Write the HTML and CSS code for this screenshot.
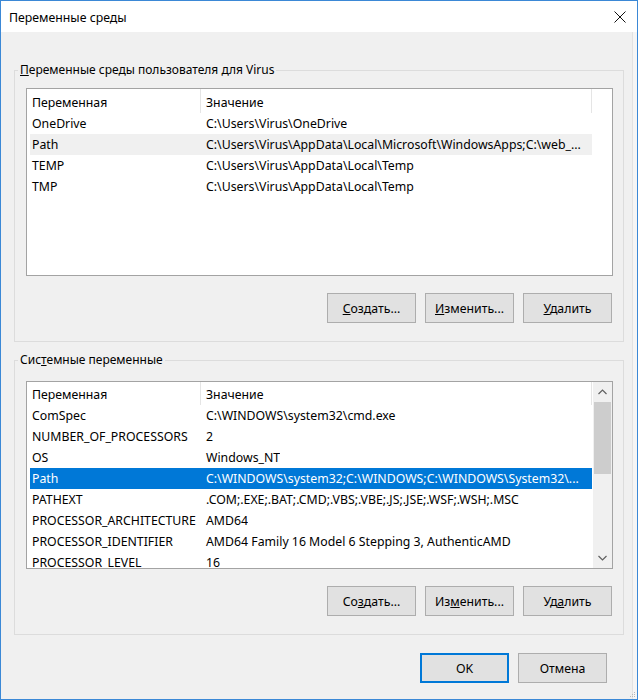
FILE: index.html
```html
<!DOCTYPE html>
<html lang="ru">
<head>
<meta charset="utf-8">
<title>Переменные среды</title>
<link rel="stylesheet" href="styles.css">
</head>
<body>
<div class="window">
  <div class="titlebar">
    <span class="title">Переменные среды</span>
    <svg class="close" width="12" height="12" viewBox="0 0 12 12"><path d="M0.5 0.5 L11.5 11.5 M11.5 0.5 L0.5 11.5" stroke="#111" stroke-width="1" fill="none"/></svg>
  </div>
  <div class="client">
    <fieldset class="group group-user">
      <legend><u>П</u>еременные среды пользователя для Virus</legend>
      <div class="listview">
        <div class="lv-header">
          <div class="hcell hcell-name">Переменная</div>
          <div class="hcell hcell-value">Значение</div>
          <div class="hcell hcell-rest"></div>
        </div>
        <div class="lv-rows">
          <div class="row"><span class="cell-name">OneDrive</span><span class="cell-value">C:\Users\Virus\OneDrive</span></div>
          <div class="row row-inactive"><span class="cell-name">Path</span><span class="cell-value">C:\Users\Virus\AppData\Local\Microsoft\WindowsApps;C:\web_...</span></div>
          <div class="row"><span class="cell-name">TEMP</span><span class="cell-value">C:\Users\Virus\AppData\Local\Temp</span></div>
          <div class="row"><span class="cell-name">TMP</span><span class="cell-value">C:\Users\Virus\AppData\Local\Temp</span></div>
        </div>
      </div>
      <div class="buttons">
        <button class="btn"><u>С</u>оздать...</button>
        <button class="btn"><u>И</u>зменить...</button>
        <button class="btn"><u>У</u>далить</button>
      </div>
    </fieldset>

    <fieldset class="group group-system">
      <legend>Сис<u>т</u>емные переменные</legend>
      <div class="listview listview-scroll">
        <div class="lv-main">
          <div class="lv-header">
            <div class="hcell hcell-name">Переменная</div>
            <div class="hcell hcell-value">Значение</div>
          </div>
          <div class="lv-rows">
            <div class="row"><span class="cell-name">ComSpec</span><span class="cell-value">C:\WINDOWS\system32\cmd.exe</span></div>
            <div class="row"><span class="cell-name">NUMBER_OF_PROCESSORS</span><span class="cell-value">2</span></div>
            <div class="row"><span class="cell-name">OS</span><span class="cell-value">Windows_NT</span></div>
            <div class="row row-selected"><span class="cell-name">Path</span><span class="cell-value">C:\WINDOWS\system32;C:\WINDOWS;C:\WINDOWS\System32\...</span></div>
            <div class="row"><span class="cell-name">PATHEXT</span><span class="cell-value">.COM;.EXE;.BAT;.CMD;.VBS;.VBE;.JS;.JSE;.WSF;.WSH;.MSC</span></div>
            <div class="row"><span class="cell-name">PROCESSOR_ARCHITECTURE</span><span class="cell-value">AMD64</span></div>
            <div class="row"><span class="cell-name">PROCESSOR_IDENTIFIER</span><span class="cell-value">AMD64 Family 16 Model 6 Stepping 3, AuthenticAMD</span></div>
            <div class="row"><span class="cell-name">PROCESSOR_LEVEL</span><span class="cell-value">16</span></div>
          </div>
        </div>
        <div class="scrollbar">
          <svg class="arrow" width="9" height="6" viewBox="0 0 9 6"><path d="M0.5 5 L4.5 1 L8.5 5" stroke="#606060" stroke-width="1.2" fill="none"/></svg>
          <div class="track"><div class="thumb"></div></div>
          <svg class="arrow" width="9" height="6" viewBox="0 0 9 6"><path d="M0.5 1 L4.5 5 L8.5 1" stroke="#606060" stroke-width="1.2" fill="none"/></svg>
        </div>
      </div>
      <div class="buttons">
        <button class="btn">Со<u>з</u>дать...</button>
        <button class="btn">Из<u>м</u>енить...</button>
        <button class="btn">Уд<u>а</u>лить</button>
      </div>
    </fieldset>

    <div class="dialog-buttons">
      <button class="btn btn-default">OK</button>
      <button class="btn">Отмена</button>
    </div>
  </div>
  <svg class="grip" width="6" height="6" viewBox="0 0 6 6"><g fill="#b8b8b8"><rect x="4" y="0" width="1" height="1"/><rect x="2" y="2" width="1" height="1"/><rect x="4" y="2" width="1" height="1"/><rect x="0" y="4" width="1" height="1"/><rect x="2" y="4" width="1" height="1"/><rect x="4" y="4" width="1" height="1"/></g></svg>
</div>
</body>
</html>
```

FILE: styles.css
```css
* { box-sizing: border-box; }

html, body {
  margin: 0;
  padding: 0;
  background: #ffffff;
}

body {
  font-family: "Noto Sans", "Open Sans", "DejaVu Sans", sans-serif;
  font-size: 12.3px;
  color: #000;
}

.window {
  position: relative;
  width: 638px;
  height: 700px;
  border: 1px solid #3b88d6;
  background: #f5f5f5;
  display: flex;
  flex-direction: column;
}

.titlebar {
  height: 31px;
  background: #ffffff;
  display: flex;
  align-items: center;
  justify-content: space-between;
  padding: 0 11px 0 8px;
  flex: none;
}

.title {
  font-size: 12.3px;
  line-height: 16px;
  margin-top: 2px;
}

.close {
  display: block;
  margin-top: 1px;
}

.client {
  flex: 1;
  background: #f0f0f0;
  margin-right: 4px;
  border-right: 1px solid #e2e2e2;
  padding: 30px 0 0 13px;
  display: flex;
  flex-direction: column;
}

.group {
  margin: 0;
  width: 610px;
  border: 1px solid #dcdcdc;
  padding: 10px 10px 18px 11px;
  min-width: 0;
}

.group legend {
  padding: 0 2px;
  margin-left: -8px;
  line-height: 16px;
  font-size: 12px;
}

.group-system {
  margin-top: 10px;
  padding-top: 13px;
}

.listview {
  width: 587px;
  height: 188px;
  border: 1px solid #a3a3a3;
  background: #ffffff;
  overflow: hidden;
}

.lv-header {
  display: flex;
  height: 24px;
  align-items: stretch;
}

.hcell {
  line-height: 24px;
  padding-left: 5px;
  padding-top: 2px;
  white-space: nowrap;
}

.hcell-name {
  width: 174px;
  border-right: 1px solid #e5e5e5;
}

.hcell-value {
  width: 391px;
  border-right: 1px solid #e5e5e5;
}

.hcell-rest {
  flex: 1;
}

.lv-rows {
  display: flex;
  flex-direction: column;
}

.row {
  display: flex;
  height: 21px;
  line-height: 22px;
  width: 562px;
  margin-left: 3px;
  white-space: nowrap;
  flex: none;
}

.cell-name {
  width: 170px;
  padding-left: 2px;
  overflow: hidden;
  flex: none;
}

.cell-value {
  padding-left: 6px;
  overflow: hidden;
}

.row-inactive {
  background: #f0f0f0;
}

.row-selected {
  background: #0078d7;
  color: #ffffff;
}

.listview-scroll {
  display: flex;
}

.listview-scroll .lv-header {
  height: 23px;
}

.listview-scroll .hcell {
  line-height: 23px;
  padding-top: 1px;
}

.lv-main {
  width: 566px;
  flex: none;
  overflow: hidden;
}

.scrollbar {
  flex: 1;
  background: #f0f0f0;
  display: flex;
  flex-direction: column;
  align-items: center;
}

.scrollbar .arrow {
  display: block;
  margin: 7px 0;
  flex: none;
}

.track {
  flex: 1;
  width: 100%;
  padding: 0 1px;
}

.thumb {
  height: 72px;
  background: #cdcdcd;
}

.buttons {
  display: flex;
  justify-content: flex-end;
  gap: 9px;
  margin-top: 17px;
  padding-right: 1px;
}

.btn {
  font-family: inherit;
  font-size: 12.3px;
  color: #000;
  width: 89px;
  height: 30px;
  padding: 0;
  background: #e1e1e1;
  border: 1px solid #adadad;
  border-radius: 0;
}

.dialog-buttons {
  display: flex;
  justify-content: flex-end;
  gap: 9px;
  margin-top: 18px;
  padding-right: 25px;
}

.btn-default {
  border: 1px solid #0078d7;
  box-shadow: inset 0 0 0 1px #0078d7;
}

.grip {
  position: absolute;
  right: 1px;
  bottom: 1px;
}
```
